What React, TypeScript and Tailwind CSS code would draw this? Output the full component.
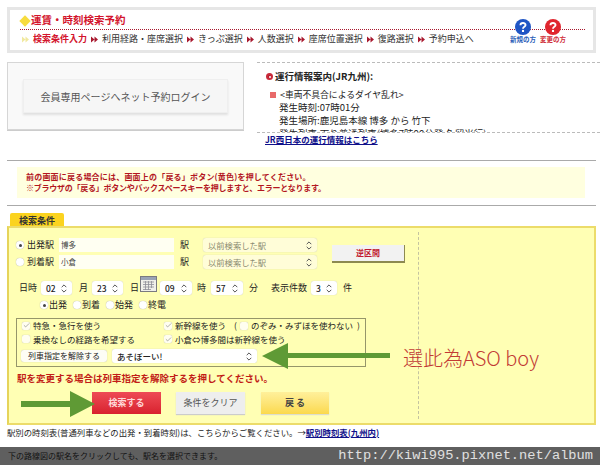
import React from "react";
import { Check } from "lucide-react";

const steps = ["利用経路・座席選択", "きっぷ選択", "人数選択", "座席位置選択", "復路選択", "予約申込へ"];

const Arrows = ({ className }: { className: string }) => (
  <svg width="7" height="7" viewBox="0 0 7 7" className={className}>
    <path d="M0 0.5 L3.5 3.5 L0 6.5 Z M3.5 0.5 L7 3.5 L3.5 6.5 Z" fill="currentColor" />
  </svg>
);

const HelpIcon = ({ color, label, textColor }: { color: string; label: string; textColor: string }) => (
  <div className="flex flex-col items-center w-[28px]">
    <svg width="16" height="16" viewBox="0 0 17 17">
      <circle cx="8.5" cy="8.5" r="8.5" fill={color} />
      <path d="M5.8 6.6 C5.8 3.4 11.2 3.4 11.2 6.5 C11.2 8.4 8.5 8.3 8.5 10.4" fill="none" stroke="#fff" strokeWidth="2" />
      <rect x="7.4" y="11.6" width="2.2" height="2.2" fill="#fff" />
    </svg>
    <span className={`text-[6.5px] leading-[8px] font-bold whitespace-nowrap ${textColor}`}>{label}</span>
  </div>
);

const Updown = () => (
  <svg width="6" height="9" viewBox="0 0 6 9" className="shrink-0">
    <path d="M0.7 3.2 L3 0.9 L5.3 3.2 M0.7 5.8 L3 8.1 L5.3 5.8" fill="none" stroke="#555" strokeWidth="1" />
  </svg>
);

const Select = ({ w, value, muted }: { w: string; value: string; muted?: boolean }) => (
  <div className={`${w} h-[14px] flex items-center justify-between rounded-[3px] shadow-[0_0_1px_#bbb] px-[5px] shrink-0 ${muted ? "bg-[#fffdd8] text-[#8a8a70]" : "bg-white text-[#222]"}`}>
    <span className={`whitespace-nowrap ${muted ? "text-[8.3px]" : "text-[8.5px] font-medium"}`}>{value}</span>
    <Updown />
  </div>
);

const Radio = ({ on }: { on?: boolean }) => (
  <span className="w-[8px] h-[8px] rounded-full bg-white shadow-[0_0_1px_#999] flex items-center justify-center shrink-0">
    {on && <span className="w-[3px] h-[3px] rounded-full bg-[#444]" />}
  </span>
);

const CheckBox = ({ on }: { on?: boolean }) => (
  <span className="w-[8px] h-[8px] rounded-[2px] bg-[#fffef0] shadow-[0_0_1px_#aaa] flex items-center justify-center shrink-0">
    {on && <Check size={7} strokeWidth={2} className="text-[#777]" />}
  </span>
);

const Station = ({ label, value, on }: { label: string; value: string; on?: boolean }) => (
  <div className="flex items-center h-[14px]">
    <Radio on={on} />
    <span className="ml-[3px] w-[32px] text-[9px] text-[#222] whitespace-nowrap">{label}</span>
    <div className="w-[115px] h-[14px] bg-[#fffff2] flex items-center px-[2px] text-[7.5px] text-[#444]">{value}</div>
    <span className="ml-[6px] w-[23px] text-[9px] text-[#222]">駅</span>
    <Select w="w-[114px]" value="以前検索した駅" muted />
  </div>
);

export default function App() {
  return (
    <div className="w-[600px] h-[465px] overflow-hidden bg-white relative [font-family:'Noto_Sans_CJK_JP','Liberation_Sans',sans-serif]">
      <div className="pl-[7px] pr-[4px] pt-[7px]">
        {/* top bar */}
        <div className="h-[46px] border-[3px] border-[#e6e6e6] bg-white relative px-[10px]">
          <div className="flex items-center h-[19px] pt-[2px]">
            <span className="w-[8px] h-[8px] rotate-45 bg-[#f7dc3e] ml-[1px]" />
            <span className="ml-[2px] text-[10.5px] leading-none font-bold text-[#d3132c] whitespace-nowrap">運賃・時刻検索予約</span>
          </div>
          <div className="border-t border-dotted border-[#a8182e] w-[565px]" />
          <div className="flex items-center h-[18px] text-[9px] text-[#333]">
            <Arrows className="text-[#f1e9a0] ml-[2px]" />
            <span className="ml-[4px] font-bold text-[#d3132c]">検索条件入力</span>
            {steps.map((s) => (
              <span key={s} className="flex items-center ml-[4px] whitespace-nowrap">
                <Arrows className="text-[#a8182e] mr-[4px]" />
                {s}
              </span>
            ))}
          </div>
          <div className="absolute right-[26px] top-[9px] flex gap-[2px]">
            <HelpIcon color="#1f55c4" label="新規の方" textColor="text-[#2a60b8]" />
            <HelpIcon color="#e0252e" label="変更の方" textColor="text-[#d0303a]" />
          </div>
        </div>

        {/* login + info */}
        <div className="flex mt-[9px]">
          <div className="w-[237px] h-[68px] border border-[#d6d6d6] bg-[#f9f9f9] flex items-center justify-center shadow-[0_1px_0_#ccc]">
            <div className="w-[205px] h-[34px] bg-[#f6f6f6] border border-[#efefef] shadow-[0_2px_2px_#e0e0e0] flex items-center justify-center text-[10px] text-[#555] whitespace-nowrap">
              会員専用ページへネット予約ログイン
            </div>
          </div>
          <div className="ml-[13px] w-[343px] -mr-[4px]">
            <div className="h-[71px] border-y border-dashed border-[#bbb] overflow-hidden pl-[9px] text-[9.5px] leading-[13px] text-[#222]">
              <div className="flex items-center mt-[7px] font-bold">
                <span className="w-[7px] h-[7px] rounded-full bg-[#b01c2c] border-[2px] border-[#c92a3a] mr-[2px] flex items-center justify-center">
                  <span className="w-[2px] h-[2px] rounded-full bg-white" />
                </span>
                運行情報案内(JR九州):
              </div>
              <div className="flex items-center mt-[5px] ml-[4px] text-[8.8px]">
                <span className="w-[6px] h-[6px] bg-[#e86a6a] mr-[4px]" />
                &lt;車両不具合によるダイヤ乱れ&gt;
              </div>
              <div className="ml-[13px]">発生時刻:07時01分</div>
              <div className="ml-[13px]">発生場所:鹿児島本線 博多 から 竹下</div>
              <div className="ml-[13px] h-[11px]">発生列車:下り普通列車(博多7時00分発 久留米行)</div>
            </div>
            <a className="block ml-[8px] text-[8.5px] leading-[12px] font-bold text-[#10108a] underline whitespace-nowrap">JR西日本の運行情報はこちら</a>
          </div>
        </div>

        {/* notice */}
        <div className="mt-[15px] border-y border-[#aaa] py-[6px] h-[46px] w-[589px]">
          <div className="ml-[10px] w-[568px] h-[31px] bg-[#ffffdf] pl-[9px] pt-[4px] text-[8px] leading-[11px] font-bold text-[#b3171f] whitespace-nowrap">
            <div className="tracking-[0.2px]">前の画面に戻る場合には、画面上の「戻る」ボタン(黄色)を押してください。</div>
            <div className="tracking-[-0.25px]">※ブラウザの「戻る」ボタンやバックスペースキーを押しますと、エラーとなります。</div>
          </div>
        </div>

        {/* tab */}
        <div className="ml-[3px] mt-[7px] w-[54px] h-[13px] bg-[#fbd31f] rounded-t-[2px] pl-[9px] text-[9px] leading-[15px] font-bold text-[#333]">検索条件</div>

        {/* form panel */}
        <div className="w-[589px] h-[199px] bg-[#ffffb4] border-2 border-[#ecdc6a] border-l-[#e6d45a] flex relative">
          <div className="w-[410px] border-r border-dashed border-[#c4c4a0] my-[4px] pl-[7px] pt-[6px]">
            <div className="flex">
              <div className="flex flex-col gap-[3px]">
                <Station label="出発駅" value="博多" on />
                <Station label="到着駅" value="小倉" />
              </div>
              <div className="ml-[15px] mt-[7px] w-[73px] h-[18px] bg-[#f2f2f2] border-r border-b-2 border-[#8d8a50] flex items-center justify-center text-[8px] font-bold text-[#c11a2f]">逆区間</div>
            </div>

            <div className="flex items-center h-[14px] mt-[12px] text-[9px] text-[#222] whitespace-nowrap">
              <span className="ml-[3px] w-[22px]">日時</span>
              <Select w="w-[31px]" value="02" />
              <span className="ml-[7px] w-[13px]">月</span>
              <Select w="w-[31px]" value="23" />
              <span className="ml-[7px] w-[10px]">日</span>
              <svg width="17" height="16" viewBox="0 0 17 16" className="-mt-[8px] shrink-0">
                <rect x="0.5" y="0.5" width="16" height="15" fill="#f0f0ea" stroke="#7a7a80" />
                <rect x="1" y="1" width="15" height="3" fill="#9aa3b5" />
                <path d="M3 6 H14 M3 8.5 H14 M3 11 H14 M3 13.5 H11 M5.5 5 V14 M8.5 5 V14 M11.5 5 V12" stroke="#8f8f98" strokeWidth="0.8" />
              </svg>
              <span className="ml-[3px]"><Select w="w-[32px]" value="09" /></span>
              <span className="ml-[5px] w-[14px]">時</span>
              <Select w="w-[32px]" value="57" />
              <span className="ml-[6px] w-[22px]">分</span>
              <span className="w-[40px]">表示件数</span>
              <Select w="w-[26px]" value="3" />
              <span className="ml-[6px]">件</span>
            </div>

            <div className="flex items-center h-[12px] mt-[4px] ml-[24px] text-[9px] text-[#222]">
              <Radio on />
              <span className="ml-[1px] w-[24px]">出発</span>
              <Radio />
              <span className="ml-[1px] w-[24px]">到着</span>
              <Radio />
              <span className="ml-[1px] w-[24px]">始発</span>
              <Radio />
              <span className="ml-[1px]">終電</span>
            </div>

            <div className="w-[350px] h-[49px] mt-[7px] border border-[#96966a] px-[5px] text-[8.5px] text-[#222] whitespace-nowrap">
              <div className="flex items-center h-[13px]">
                <CheckBox on />
                <span className="ml-[3px] w-[131px]">特急・急行を使う</span>
                <CheckBox on />
                <span className="ml-[3px]">新幹線を使う</span>
                <span className="ml-[8px] mr-[3px]">(</span>
                <CheckBox />
                <span className="ml-[3px]">のぞみ・みずほを使わない</span>
                <span className="ml-[4px]">)</span>
              </div>
              <div className="flex items-center h-[14px]">
                <CheckBox />
                <span className="ml-[3px] w-[131px]">乗換なしの経路を希望する</span>
                <CheckBox on />
                <span className="ml-[3px]">小倉⇔博多間は新幹線を使う</span>
              </div>
              <div className="flex items-center h-[14px] -ml-[1px] mt-[3px]">
                <div className="w-[86px] h-[12px] bg-[#fdfdf5] rounded-[3px] shadow-[0_0_1px_#aaa] flex items-center justify-center text-[8px]">列車指定を解除する</div>
                <div className="ml-[5px]"><Select w="w-[145px]" value="あそぼーい!" /></div>
              </div>
            </div>

            <div className="mt-[4px] ml-[1px] text-[9.5px] leading-[14px] font-bold text-[#c21d17] whitespace-nowrap">駅を変更する場合は列車指定を解除するを押してください。</div>

            <div className="flex mt-[7px] ml-[76px] text-[9px]">
              <div className="w-[69px] h-[22px] bg-gradient-to-b from-[#ee4a55] to-[#d81f2e] text-[#ffd9d9] font-bold flex items-center justify-center">検索する</div>
              <div className="ml-[15px] w-[69px] h-[22px] bg-[#eeeeee] shadow-[0_1px_1px_#ccc] text-[#555] flex items-center justify-center">条件をクリア</div>
              <div className="ml-[16px] w-[68px] h-[22px] bg-gradient-to-b from-[#fff09a] to-[#fbd94a] shadow-[0_1px_1px_#ddc] text-[#444] font-bold flex items-center justify-center">戻 る</div>
            </div>
          </div>

          {/* annotations over the form */}
          <svg width="128" height="26" viewBox="0 0 128 26" className="absolute left-[253px] top-[115px]">
            <path d="M0 13 L26 0 L26 10 L128 10 L128 15 L26 15 L26 26 Z" fill="#5f9a35" />
          </svg>
          <svg width="75" height="26" viewBox="0 0 75 26" className="absolute left-[12px] top-[163px]">
            <path d="M0 10 L49 10 L49 0 L74 13 L49 26 L49 16 L0 16 Z" fill="#5f9a35" />
          </svg>
          <span className="absolute left-[394px] top-[117px] text-[20px] leading-[26px] font-light text-[#c23a34] whitespace-nowrap">選此為ASO boy</span>
        </div>

        <div className="mt-[1px] text-[8.4px] leading-[13px] text-[#222] whitespace-nowrap">
          駅別の時刻表(普通列車などの出発・到着時刻)は、こちらからご覧ください。→<a className="font-bold text-[#10108a] underline">駅別時刻表(九州内)</a>
        </div>
      </div>

      <div className="absolute left-0 right-0 bottom-0 h-[18px] bg-[#5f5f5f] flex items-center justify-between pl-[8px] pr-[7px]">
        <span className="text-[8px] text-[#111]">下の路線図の駅名をクリックしても、駅名を選択できます。</span>
        <span className="[font-family:'Liberation_Mono',monospace] text-[13.7px] text-[#e0e0e0] whitespace-nowrap">http://kiwi995.pixnet.net/album</span>
      </div>
    </div>
  );
}
